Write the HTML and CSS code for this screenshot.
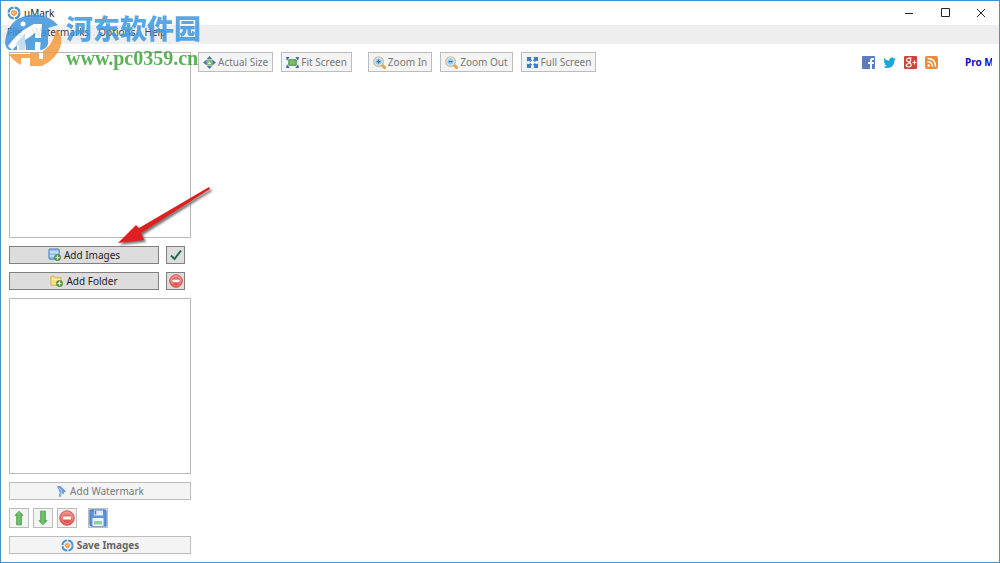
FILE: index.html
```
<!DOCTYPE html>
<html lang="en">
<head>
<meta charset="utf-8">
<title>uMark</title>
<link rel="stylesheet" href="styles.css">
</head>
<body>
<svg class="defs" aria-hidden="true">
  <defs>
    <linearGradient id="red" x1="0" y1="0" x2="0" y2="1"><stop offset="0" stop-color="#f08a80"/><stop offset="1" stop-color="#d8433c"/></linearGradient>
    <linearGradient id="green" x1="0" y1="0" x2="1" y2="0"><stop offset="0" stop-color="#2f8f35"/><stop offset=".5" stop-color="#7fcb74"/><stop offset="1" stop-color="#2c8a34"/></linearGradient>
    <symbol id="brand" viewBox="0 0 16 16">
      <circle cx="8" cy="8" r="6.2" fill="#fff" stroke="#4a96d4" stroke-width="2.6" stroke-dasharray="8.4 1.340"/>
      <path d="M4.500 6l3.500-1.500 3.500 1.500v3L8 12 4.500 9z" fill="#f09a4c"/>
      <path d="M6 7.500l2 1 2-2" fill="none" stroke="#fff"/>
    </symbol>
    <symbol id="minus" viewBox="0 0 16 16">
      <circle cx="8" cy="8" r="7.300" fill="url(#red)" stroke="#d9605a"/>
      <circle cx="8" cy="8" r="5.500" fill="none" stroke="#f6aaa4" stroke-width=".7"/>
      <rect x="4" y="6.500" width="8" height="3" rx=".5" fill="#fff"/>
    </symbol>
    <symbol id="plus" viewBox="0 0 8 8">
      <circle cx="4" cy="4" r="3.600" fill="#56a447" stroke="#377c2c" stroke-width=".7"/>
      <path d="M4 1.800v4.400M1.800 4h4.400" stroke="#fff" stroke-width="1.300"/>
    </symbol>
    <symbol id="lens" viewBox="0 0 14 14">
      <path d="M9.500 9.500l3 3" stroke="#e6a13c" stroke-width="3" stroke-linecap="round"/>
      <circle cx="6" cy="6" r="5.200" fill="#b5dbf3" stroke="#d9b98c" stroke-width="1.300"/>
      <circle cx="6" cy="6" r="3.900" fill="#9acbec" stroke="#e8f4fb" stroke-width=".7"/>
    </symbol>
  </defs>
</svg>
<div class="window">
  <header class="titlebar">
    <svg class="app-icon"><use href="#brand"/></svg>
    <h1 class="title">uMark</h1>
    <div class="window-buttons">
      <button class="window-button" aria-label="Minimize"><svg viewBox="0 0 10 10"><path d="M1 5.500h8"/></svg></button>
      <button class="window-button" aria-label="Maximize"><svg viewBox="0 0 10 10"><path d="M1.500 .5h8v8h-8z"/></svg></button>
      <button class="window-button" aria-label="Close"><svg viewBox="0 0 10 10"><path d="M1 1l8 8M9 1l-8 8"/></svg></button>
    </div>
  </header>
  <nav class="menubar">
    <button class="menu">File</button>
    <button class="menu">Watermarks</button>
    <button class="menu">Options</button>
    <button class="menu">Help</button>
  </nav>
  <main class="content">
    <aside class="sidebar">
      <div class="list image-list"></div>
      <div class="row add-row">
        <button class="button active grow"><svg class="icon" viewBox="0 0 14 14"><rect x="1" y="1" width="11" height="11" rx="1" fill="#8fb9e8" stroke="#4d80be"/><path d="M2 3h9v3H2z" fill="#c6dcf3"/><path d="M2 8h9v1H2z" fill="#fff"/><use href="#plus" x="6.500" y="6.500" width="7.500" height="7.500"/></svg>Add Images</button>
        <button class="button active square" aria-label="Select all"><svg class="icon remove" viewBox="0 0 14 14"><path d="M2 7.500L5.500 11 12 2.500" fill="none" stroke="#1f6b49" stroke-width="2"/></svg></button>
      </div>
      <div class="row add-row">
        <button class="button active grow"><svg class="icon" viewBox="0 0 14 14"><path d="M1 2.500h4l1 1.500h6v8H1z" fill="#f8df87" stroke="#d9b04a"/><path d="M2 6h9" stroke="#fff3c0"/><use href="#plus" x="6.500" y="6.500" width="7.500" height="7.500"/></svg>Add Folder</button>
        <button class="button active square" aria-label="Remove image"><svg class="icon remove"><use href="#minus"/></svg></button>
      </div>
      <div class="list watermark-list"></div>
      <button class="button"><svg class="icon slim" viewBox="0 0 12 14"><path d="M1 1h4l6 6-2.500 1 .5 2-3-1L5.500 13 3 12.500l1-5z" fill="#6d9fdc"/><path d="M3 3l3 3-1 5" fill="none" stroke="#b9d4f3"/></svg>Add Watermark</button>
      <div class="row tools">
        <button class="button tool" aria-label="Move up"><svg class="icon large" viewBox="0 0 16 16"><path d="M8 1l4.200 4.500H10.500V15h-5V5.500H3.800z" fill="url(#green)" stroke="#56a155" stroke-width=".6"/></svg></button>
        <button class="button tool" aria-label="Move down"><svg class="icon large" viewBox="0 0 16 16"><path d="M8 15l4.200-4.500H10.500V1h-5v9.500H3.800z" fill="url(#green)" stroke="#56a155" stroke-width=".6"/></svg></button>
        <button class="button tool" aria-label="Remove watermark"><svg class="icon large"><use href="#minus"/></svg></button>
        <button class="button tool save" aria-label="Save watermark"><svg class="icon disk" viewBox="0 0 18 18"><path d="M1 1h15l1 1v15H2l-1-1z" fill="#5f95df" stroke="#3d6fba"/><rect x="5" y="1.500" width="9" height="5" fill="#e4eefa"/><path d="M6.500 2v3.500" stroke="#4778c4" stroke-width="1.500"/><rect x="3.500" y="9" width="11" height="8" fill="#eef5fb"/><path d="M5 12h8v3.500H5z" fill="#8fcf9b"/></svg></button>
      </div>
      <button class="button strong"><svg class="icon"><use href="#brand"/></svg>Save Images</button>
    </aside>
    <section class="viewer">
      <div class="toolbar">
        <button class="button"><svg class="icon" viewBox="0 0 14 14"><path d="M3.500 4h7v6h-7z" fill="#80bd76"/><path d="M7 0l3 3.500H4zM7 14l3-3.500H4zM0 7l3.800-3v6zM14 7l-3.800-3v6z" fill="#4c72a9"/><path d="M5 8.500l2-2.500 2 2.500z" fill="#e9f5e4"/></svg>Actual Size</button>
        <button class="button"><svg class="icon" viewBox="0 0 14 14"><path d="M3 4h8v6H3z" fill="#7abe6b" stroke="#3f8b49"/><path d="M0 1h4L1 5zM14 1h-4l3 4zM0 13h4L1 9zM14 13h-4l3-4z" fill="#4068ae"/></svg>Fit Screen</button>
        <button class="button group"><svg class="icon" viewBox="0 0 14 14"><use href="#lens"/><path d="M6 4v4M4 6h4" stroke="#2e74b5" stroke-width="1.300"/></svg>Zoom In</button>
        <button class="button"><svg class="icon" viewBox="0 0 14 14"><use href="#lens"/><path d="M4 6h4" stroke="#2e74b5" stroke-width="1.300"/></svg>Zoom Out</button>
        <button class="button"><svg class="icon" viewBox="0 0 14 14"><path d="M1 1h5L5 3l1.500 1.500-2 2L3 5 1 6zM13 1H8l1 2-1.500 1.500 2 2L11 5l2 1zM1 13h5l-1-2 1.500-1.500-2-2L3 9 1 8zM13 13H8l1-2-1.500-1.500 2-2L11 9l2-1z" fill="#3c7cc0"/></svg>Full Screen</button>
        <div class="social">
          <a href="#" aria-label="Facebook"><svg viewBox="0 0 13 13"><rect width="13" height="13" rx="1" fill="#5b7dbc"/><path d="M8 13V8H6V6h2V4.500Q8 2 10.500 2H12v2h-1.200Q10 4 10 5v1h2l-.3 2H10v5z" fill="#fff"/></svg></a>
          <a href="#" aria-label="Twitter"><svg viewBox="0 0 13 13"><path d="M1 2q2.200 2.600 5.300 2.700Q6 2 8.500 1.500q1.300-.1 2.200.8l1.600-.6-1 1.500 1.500-.3-1.300 1.400Q11.500 9 8 11.200 4 13 0 10.800q2.200.1 3.700-1.200-1.800-.2-2.300-1.900h1.100Q.7 6.900.7 4.900l1.200.3Q.3 3.800 1 2z" fill="#1ca7dc"/></svg></a>
          <a href="#" aria-label="Google Plus"><svg viewBox="0 0 13 13"><rect width="13" height="13" rx="1" fill="#cf4438"/><g fill="none" stroke="#fff" stroke-width="1.200"><ellipse cx="4.700" cy="4" rx="2" ry="1.800"/><path d="M7.500 2H5M5 6q2.500 1.500 2.200 3.200Q6.800 11 4.500 11 2 10.700 2.300 9.200 2.700 7.500 5.800 7.500M8.500 6.500h4M10.500 4.500v4"/></g></svg></a>
          <a href="#" aria-label="RSS"><svg viewBox="0 0 13 13"><rect width="13" height="13" rx="2" fill="#ec8b38"/><circle cx="3.700" cy="9.500" r="1.200" fill="#fff"/><path d="M2.500 5.700q4.800 0 4.800 4.900M2.500 2.500q8 0 8 8.200" fill="none" stroke="#fff" stroke-width="1.500"/></svg></a>
        </div>
        <a class="mode" href="#">Pro Mode</a>
      </div>
    </section>
  </main>
  <div class="site-mark">
    <svg class="site-logo" viewBox="0 0 60 56" aria-hidden="true">
      <path d="M1 30Q2 16 12 8 22 2 34 3 46 4 54 13L44 16V32Q42 38 35 38H5Q1 35 1 30z" fill="#3d94dc"/>
      <path d="M4 34Q12 23 21 17L30 12H38L36 38H31V21L22 28V38H13V33L8 38z" fill="#fff"/>
      <path d="M12 32L21 21V38H15V34z" fill="#3d94dc" opacity=".35"/>
      <path d="M21 28L31 22V26H37V30H31L30 38H22z" fill="#3d94dc"/>
      <circle cx="19" cy="12" r="2.500" fill="#fff"/>
      <path d="M52 18Q59 22 57 33 53 47 38 54H26V41H35V47H39V39Q49 33 52 18z" fill="#f39a3e"/>
      <path d="M5 42H17V53Q9 49 5 42z" fill="#f39a3e"/>
      <path d="M16 42H27V46H16z" fill="#f39a3e"/>
    </svg>
    <div class="site-text"><span class="site-name" lang="zh">河东软件园</span><span class="site-url">www.pc0359.cn</span></div>
  </div>
  <svg class="pointer" viewBox="0 0 100 64" aria-hidden="true"><path d="M97 5L27 46l-3-3L6 61l26-3-3-7L98 7z" fill="#e01f20"/></svg>
</div>
</body>
</html>
```
FILE: styles.css
```
* { box-sizing: border-box; }
body { margin: 0; font-family: "Noto Sans", "Noto Sans CJK SC", sans-serif; font-size: 10px; line-height: 14px; color: #222; background: #fff; }
button { font: inherit; color: inherit; margin: 0; padding: 0; border: 0; background: none; }
svg { display: block; flex: none; }
.defs { position: absolute; width: 0; height: 0; }
.window { position: relative; display: flex; flex-direction: column; height: 100vh; border: 1px solid #4a90c4; overflow: hidden; }
.titlebar { display: flex; align-items: center; gap: 3px; height: 24px; padding-left: 6px; }
.app-icon { width: 14px; height: 14px; }
.title { margin: 0; font-size: 10px; font-weight: 400; }
.window-buttons { display: flex; margin-left: auto; }
.window-button { display: grid; place-items: center; width: 36px; height: 22px; }
.window-button svg { width: 10px; height: 10px; fill: none; stroke: #222; }
.menubar { display: flex; align-items: flex-start; gap: 9px; height: 19px; padding-left: 6px; background: #eee; color: #444; }
.content { display: flex; flex: 1; gap: 7px; min-height: 0; padding: 8px 7px 8px 8px; }
.sidebar { display: flex; flex-direction: column; gap: 8px; width: 182px; flex: none; }
.list { border: 1px solid #b8b8b8; }
.image-list { flex: 187; }
.watermark-list { flex: 177; }
.row { display: flex; }
.add-row { gap: 7px; padding-right: 6px; }
.button { display: flex; align-items: center; justify-content: center; gap: 3px; height: 18px; border: 1px solid #bcbcbc; background: #f4f4f4; color: #777; white-space: nowrap; }
.active { border-color: #808080; background: #ddd; color: #222; }
.grow { flex: 1; }
.square { width: 19px; }
.strong { font-weight: 700; color: #666; }
.icon { width: 13px; height: 13px; }
.remove { width: 14px; height: 14px; }
.slim { width: 11px; }
.tools { gap: 4px; }
.tool { width: 20px; height: 20px; }
.large { width: 16px; height: 16px; }
.save { margin-left: 7px; background: #c9dcf4; }
.disk { width: 18px; height: 18px; }
.viewer { flex: 1; min-width: 0; }
.toolbar { display: flex; align-items: center; gap: 8px; height: 20px; overflow: hidden; }
.toolbar .button { height: 20px; padding: 0 4px; gap: 2px; }
.toolbar .group { margin-left: 8px; }
.social { display: flex; gap: 8px; margin-left: auto; }
.social svg { width: 13px; height: 13px; }
.mode { width: 27px; margin-left: 19px; overflow: hidden; white-space: nowrap; font-weight: 700; color: #0a0ac8; text-decoration: none; }
.site-mark { position: absolute; left: 3px; top: 11px; display: flex; gap: 2px; pointer-events: none; }
.site-logo { width: 60px; height: 56px; opacity: .85; }
.site-text { display: flex; flex-direction: column; gap: 3px; white-space: nowrap; opacity: .85; }
.site-name { font: 900 27px/32px "Noto Sans CJK SC", sans-serif; color: #3d98e2; }
.site-url { font: 700 20px/22px "Liberation Serif", serif; color: #3fa539; }
.pointer { position: absolute; left: 111px; top: 181px; width: 100px; height: 64px; filter: drop-shadow(2px 2px 1px #777); pointer-events: none; }
```
